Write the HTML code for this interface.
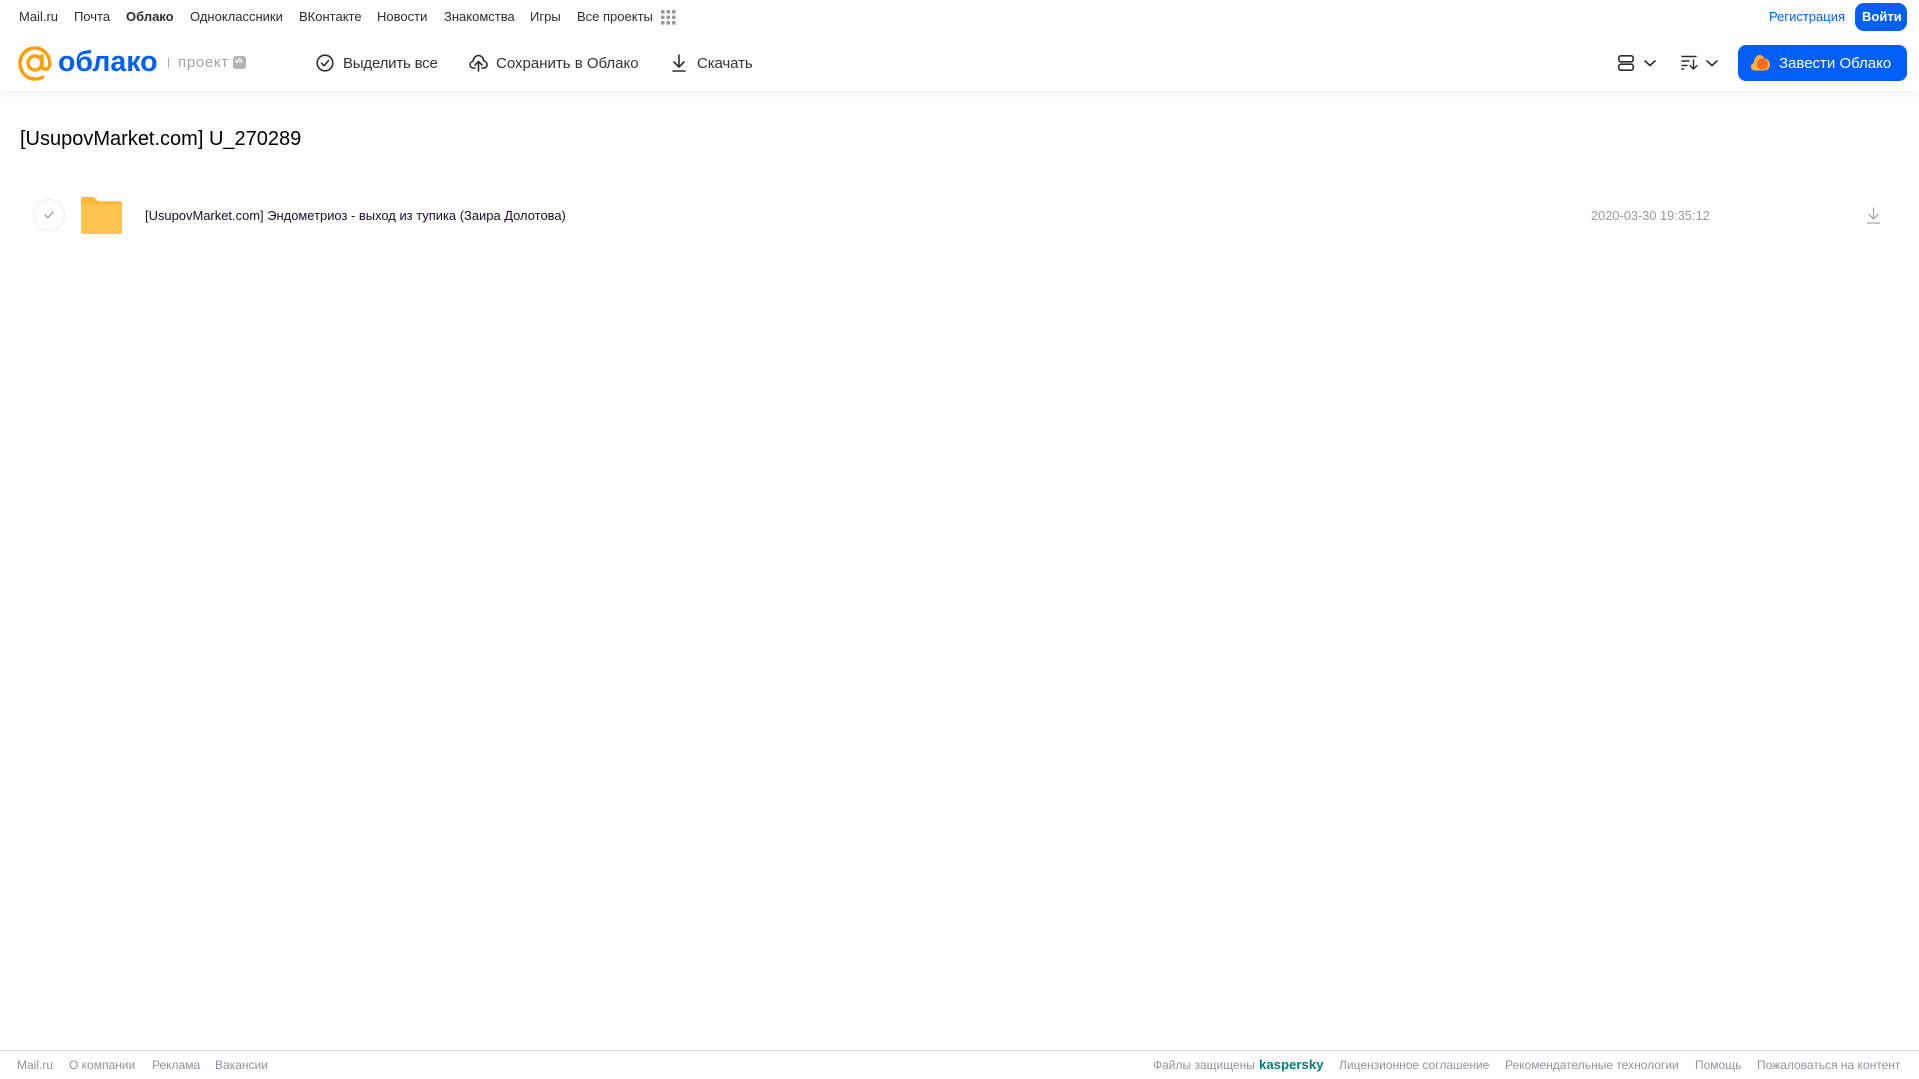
<!DOCTYPE html>
<html lang="ru"><head><meta charset="utf-8"><title>Облако</title>
<style>
html,body{margin:0;padding:0;width:1919px;height:1079px;overflow:hidden;background:#fff}
body{font-family:"Liberation Sans",Arial,sans-serif;position:relative}
.t{position:absolute;white-space:nowrap;line-height:20px;height:20px}
.n{top:7px;font-size:13px;color:#2c2d2e}
.a{top:54px;font-size:15px;color:#333}
.f{top:1055px;font-size:12px;color:#919399}
svg{position:absolute;overflow:visible}
</style></head><body>
<div style="position:absolute;left:0;top:0;width:1919px;height:91px;background:#fff;box-shadow:0 2px 8px rgba(0,0,0,.07)"></div>

<span class="t n" style="left:19px">Mail.ru</span>
<span class="t n" style="left:74px">Почта</span>
<span class="t n" style="left:126px;font-weight:700">Облако</span>
<span class="t n" style="left:190px">Одноклассники</span>
<span class="t n" style="left:299px">ВКонтакте</span>
<span class="t n" style="left:377px">Новости</span>
<span class="t n" style="left:444px">Знакомства</span>
<span class="t n" style="left:530px">Игры</span>
<span class="t n" style="left:577px">Все проекты</span>
<svg style="left:661px;top:10px" width="15" height="15" fill="#999"><rect x="0" y="0" width="3.6" height="3.6" rx=".8"/><rect x="5.5" y="0" width="3.6" height="3.6" rx=".8"/><rect x="11" y="0" width="3.6" height="3.6" rx=".8"/><rect x="0" y="5.5" width="3.6" height="3.6" rx=".8"/><rect x="5.5" y="5.5" width="3.6" height="3.6" rx=".8"/><rect x="11" y="5.5" width="3.6" height="3.6" rx=".8"/><rect x="0" y="11" width="3.6" height="3.6" rx=".8"/><rect x="5.5" y="11" width="3.6" height="3.6" rx=".8"/><rect x="11" y="11" width="3.6" height="3.6" rx=".8"/></svg>

<span class="t" style="left:1769px;top:7px;font-size:13px;color:#005ff9">Регистрация</span>
<div style="position:absolute;left:1855px;top:3px;width:52px;height:28px;border-radius:9px;background:#005ff9"></div>
<span class="t" style="left:1862px;top:7px;font-size:13px;font-weight:700;color:#fff">Войти</span>

<svg style="left:18px;top:46px" width="34" height="36" viewBox="0 0 34 36" fill="none" stroke="#ff9e00" stroke-width="3.4"><circle cx="17" cy="17" r="7"/><path d="M24 10v9.500c0 5.500 7.800 5 7.800-1.500C31.800 8.500 25 2 17 2 8.500 2 2 8.800 2 17.500 2 26.500 9 33 17 33c3 0 5.500-.6 7.500-1.800" stroke-linecap="round"/></svg>
<span class="t" style="left:58px;top:46px;height:32px;line-height:32px;font-size:28.5px;font-weight:700;color:#005ff9">облако</span>
<div style="position:absolute;left:168px;top:58px;width:1px;height:10px;background:#aaa"></div>
<span class="t" style="left:178px;top:53px;font-size:15px;color:#a3a3a3;letter-spacing:.7px">проект</span>
<div style="position:absolute;left:233px;top:56px;width:13px;height:13px;border-radius:3px;background:#b3b3b3"></div>
<span class="t" style="left:235px;top:52px;font-size:7px;font-weight:700;color:#fff">vk</span>

<svg style="left:316px;top:54px" width="18" height="18" fill="none" stroke="#2c2d2e" stroke-width="1.6"><circle cx="9" cy="9" r="7.800"/><path d="M5.500 9.200l2.500 2.500 4.500-5" stroke-linecap="round" stroke-linejoin="round"/></svg>
<span class="t a" style="left:343px;letter-spacing:-.2px">Выделить все</span>
<svg style="left:469px;top:54px" width="19" height="18" viewBox="0 0 19 18" fill="none" stroke="#2c2d2e" stroke-width="1.6" stroke-linecap="round" stroke-linejoin="round"><path d="M6 14H4.500C2.500 14 1 12.500 1 10.700c0-1.700 1.300-3 3-3.200C4.300 4 6.700 1.500 9.500 1.500c2.800 0 5 2.300 5.300 5.500 2 .2 3.300 1.800 3.300 3.700 0 1.800-1.500 3.300-3.300 3.300H13"/><path d="M9.500 17V8M6 11l3.500-3.500L13 11"/></svg>
<span class="t a" style="left:496px">Сохранить в Облако</span>
<svg style="left:671px;top:54px" width="16" height="18" fill="none" stroke="#2c2d2e" stroke-width="1.6" stroke-linecap="round" stroke-linejoin="round"><path d="M8 1v11.500M3 8l5 5 5-5M2 17h12"/></svg>
<span class="t a" style="left:697px;letter-spacing:-.1px">Скачать</span>

<svg style="left:1618px;top:55px" width="16" height="16" fill="none" stroke="#2c2d2e" stroke-width="1.6"><rect x=".8" y=".8" width="14.400" height="6" rx="2"/><rect x=".8" y="9.200" width="14.400" height="6" rx="2"/></svg>
<svg style="left:1644px;top:60px" width="12" height="7" fill="none" stroke="#2c2d2e" stroke-width="1.700" stroke-linecap="round" stroke-linejoin="round"><path d="M1 1l5 4.500L11 1"/></svg>
<svg style="left:1681px;top:55px" width="17" height="15" fill="none" stroke="#2c2d2e" stroke-width="1.400" stroke-linecap="round" stroke-linejoin="round"><path d="M1 1.500h14M1 6h7M1 10.500h5M1 14h1.500M12.500 5v9M9 10.500l3.500 3.500 3.500-3.500"/></svg>
<svg style="left:1706px;top:60px" width="12" height="7" fill="none" stroke="#2c2d2e" stroke-width="1.700" stroke-linecap="round" stroke-linejoin="round"><path d="M1 1l5 4.500L11 1"/></svg>

<div style="position:absolute;left:1738px;top:45px;width:169px;height:36px;border-radius:8px;background:#005ff9"></div>
<svg style="left:1751px;top:55px" width="19" height="16"><path d="M4 15.500C1.700 15.500 0 13.800 0 11.700c0-1.800 1.200-3.200 2.800-3.600C3 3.500 5.500 0 8.500 0c2.300 0 4 1.500 4.800 3.500 3.300 0 5.700 2.700 5.700 6 0 3.400-2.500 6-5.700 6z" fill="#ffb13d"/><circle cx="11.500" cy="9" r="5.500" fill="#ff6a1a"/></svg>
<span class="t" style="left:1779px;top:54px;font-size:15px;color:#fff">Завести Облако</span>

<span class="t" style="left:20px;top:127px;height:24px;line-height:24px;font-size:20px;color:#000">[UsupovMarket.com] U_270289</span>

<div style="position:absolute;left:33px;top:199px;width:30px;height:30px;border:1px solid #ececec;border-radius:50%"></div>
<svg style="left:44px;top:211px" width="10" height="8" fill="none" stroke="#9a9a9a" stroke-width="1.300" stroke-linecap="round" stroke-linejoin="round"><path d="M1 4l2.800 2.800L9 1"/></svg>
<svg style="left:81px;top:197px" width="41" height="37" viewBox="0 0 41 37"><path d="M2 0h9c2.500 0 3.500 1 4.500 2.500.6 1 1.500 1.700 3 1.700H39c1.200 0 2 .8 2 2V12H0V2C0 .8.800 0 2 0z" fill="#ffb838"/><path d="M0 9c0-1 .8-1.800 2-1.800h37c1.200 0 2 .8 2 1.800v26c0 1.200-.8 2-2 2H2c-1.200 0-2-.8-2-2z" fill="#ffc350"/></svg>
<span class="t" style="left:145px;top:206px;font-size:12.950px;color:#1a1020">[UsupovMarket.com] Эндометриоз - выход из тупика (Заира Долотова)</span>
<span class="t" style="left:1591px;top:206px;font-size:12.800px;color:#999">2020-03-30 19:35:12</span>
<svg style="left:1867px;top:207px" width="13" height="17" fill="none" stroke="#a6a6a6" stroke-width="1.300"><path d="M6.500 .5v11M1.500 7l5 5 5-5M0 16h13"/></svg>

<div style="position:absolute;left:0;top:1050px;width:1919px;height:1px;background:#d9d9d9"></div>
<span class="t f" style="left:17px">Mail.ru</span>
<span class="t f" style="left:69px">О компании</span>
<span class="t f" style="left:152px">Реклама</span>
<span class="t f" style="left:215px">Вакансии</span>
<span class="t f" style="left:1153px">Файлы защищены</span>
<span class="t f" style="left:1259px;font-size:13.200px;font-weight:700;color:#00806b">kaspersky</span>
<span class="t f" style="left:1339px">Лицензионное соглашение</span>
<span class="t f" style="left:1505px">Рекомендательные технологии</span>
<span class="t f" style="left:1695px">Помощь</span>
<span class="t f" style="left:1757px">Пожаловаться на контент</span>
</body></html>
